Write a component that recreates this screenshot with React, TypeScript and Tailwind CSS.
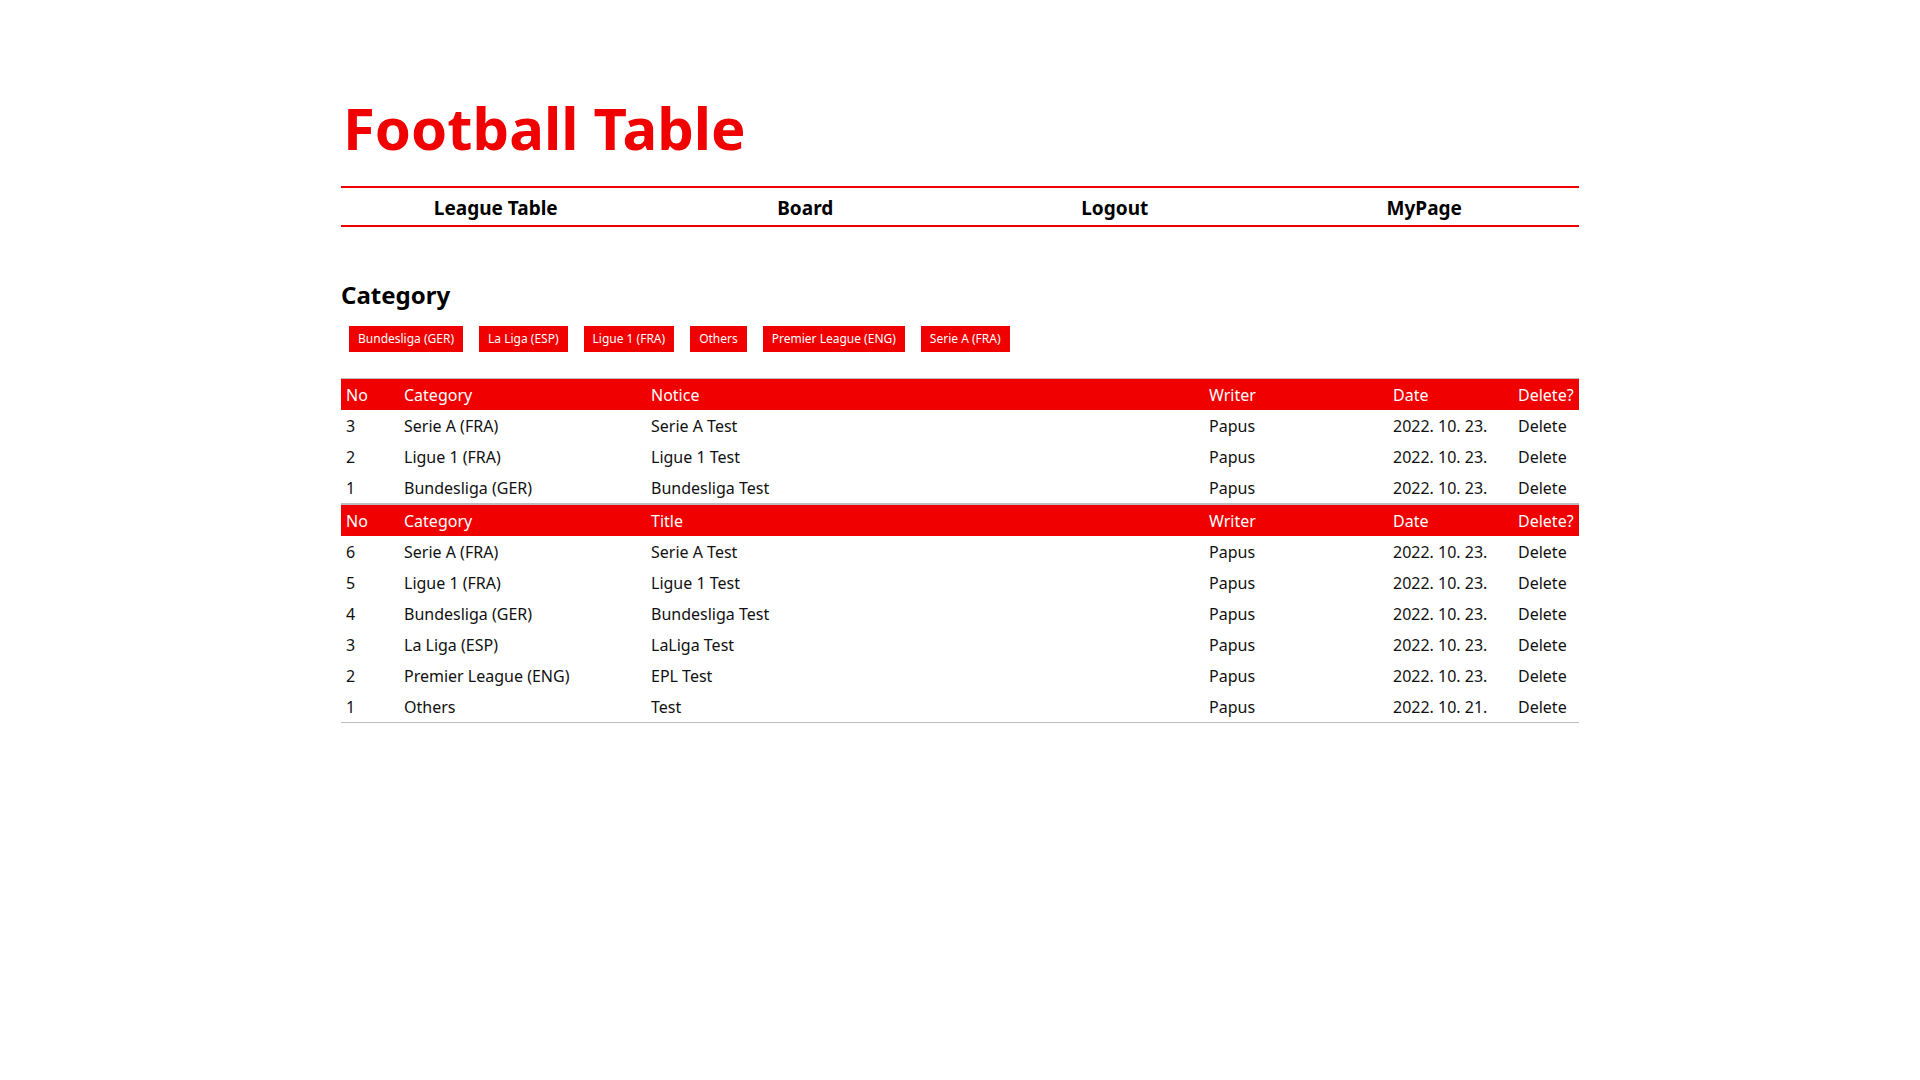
import React from 'react'

interface Post {
  no: number
  category: string
  title: string
  writer: string
  date: string
}

const categories = [
  'Bundesliga (GER)',
  'La Liga (ESP)',
  'Ligue 1 (FRA)',
  'Others',
  'Premier League (ENG)',
  'Serie A (FRA)',
]

const notices: Post[] = [
  { no: 3, category: 'Serie A (FRA)', title: 'Serie A Test', writer: 'Papus', date: '2022. 10. 23.' },
  { no: 2, category: 'Ligue 1 (FRA)', title: 'Ligue 1 Test', writer: 'Papus', date: '2022. 10. 23.' },
  { no: 1, category: 'Bundesliga (GER)', title: 'Bundesliga Test', writer: 'Papus', date: '2022. 10. 23.' },
]

const posts: Post[] = [
  { no: 6, category: 'Serie A (FRA)', title: 'Serie A Test', writer: 'Papus', date: '2022. 10. 23.' },
  { no: 5, category: 'Ligue 1 (FRA)', title: 'Ligue 1 Test', writer: 'Papus', date: '2022. 10. 23.' },
  { no: 4, category: 'Bundesliga (GER)', title: 'Bundesliga Test', writer: 'Papus', date: '2022. 10. 23.' },
  { no: 3, category: 'La Liga (ESP)', title: 'LaLiga Test', writer: 'Papus', date: '2022. 10. 23.' },
  { no: 2, category: 'Premier League (ENG)', title: 'EPL Test', writer: 'Papus', date: '2022. 10. 23.' },
  { no: 1, category: 'Others', title: 'Test', writer: 'Papus', date: '2022. 10. 21.' },
]

const navItems = ['League Table', 'Board', 'Logout', 'MyPage']

function PostTable({ label, rows }: { label: string; rows: Post[] }) {
  return (
    <table className="w-full table-fixed border-separate border-spacing-0 border-y border-[#bdbdbd] text-[16px]">
      <colgroup>
        <col className="w-[58px]" />
        <col className="w-[247px]" />
        <col className="w-[558px]" />
        <col className="w-[184px]" />
        <col className="w-[125px]" />
        <col />
      </colgroup>
      <thead>
        <tr className="h-[31px] bg-[#f00000] text-white text-left">
          <th className="pl-[5px] font-normal">No</th>
          <th className="pl-[5px] font-normal">Category</th>
          <th className="pl-[5px] font-normal">{label}</th>
          <th className="pl-[5px] font-normal">Writer</th>
          <th className="pl-[5px] font-normal">Date</th>
          <th className="pl-[5px] font-normal">Delete?</th>
        </tr>
      </thead>
      <tbody>
        {rows.map((row) => (
          <tr key={row.no + row.title} className="h-[31px] text-[#111]">
            <td className="pl-[5px]">{row.no}</td>
            <td className="pl-[5px]">{row.category}</td>
            <td className="pl-[5px]">{row.title}</td>
            <td className="pl-[5px]">{row.writer}</td>
            <td className="pl-[5px]">{row.date}</td>
            <td className="pl-[5px] cursor-pointer">Delete</td>
          </tr>
        ))}
      </tbody>
    </table>
  )
}

export default function App() {
  return (
    <div className="min-h-screen bg-white font-['Noto_Sans','Liberation_Sans',sans-serif] text-black">
      <div className="mx-auto w-[1238px] pt-[86px]">
        {/* Title */}
        <h1 className="pl-[2px] text-[58px] font-bold leading-[84px] text-[#f00000]">Football Table</h1>

        {/* Navigation */}
        <nav className="mt-[16px] grid h-[41px] grid-cols-4 items-center border-y-2 border-[#f00000] pt-[3px] text-center text-[19px] font-bold">
          {navItems.map((item) => (
            <a key={item} className="cursor-pointer">
              {item}
            </a>
          ))}
        </nav>

        {/* Category */}
        <h2 className="mt-[52px] text-[24px] font-bold leading-[32px]">Category</h2>
        <div className="mt-[15px] flex gap-4 pl-2">
          {categories.map((c) => (
            <button key={c} className="h-[26px] bg-[#f00000] px-[9px] text-[12px] text-white">
              {c}
            </button>
          ))}
        </div>

        {/* Tables */}
        <div className="mt-[26px]">
          <PostTable label="Notice" rows={notices} />
          <PostTable label="Title" rows={posts} />
        </div>
      </div>
    </div>
  )
}
